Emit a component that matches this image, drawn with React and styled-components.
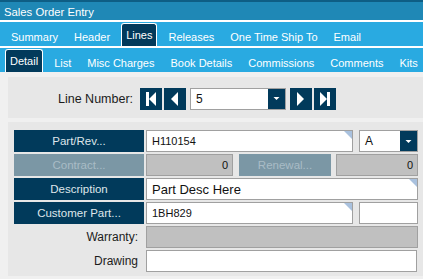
import React from "react";
import styled, { createGlobalStyle } from "styled-components";

const GlobalStyle = createGlobalStyle`
  body {
    margin: 0;
    background: #f0f0f0;
    font-family: "Liberation Sans", Arial, sans-serif;
    overflow: hidden;
  }
`;

const mainTabs = ["Summary", "Header", "Lines", "Releases", "One Time Ship To", "Email"];
const subTabs = ["Detail", "List", "Misc Charges", "Book Details", "Commissions", "Comments", "Kits"];

function NavIcon({ kind }) {
  // simple first / prev / next / last glyphs
  return (
    <svg width="22" height="22" viewBox="0 0 22 22">
      {kind === "first" && (
        <>
          <rect x="6" y="4" width="3" height="14" fill="#fff" />
          <polygon points="9,11 16,4 16,18" fill="#fff" />
        </>
      )}
      {kind === "prev" && <polygon points="7,11 14,4 14,18" fill="#fff" />}
      {kind === "next" && <polygon points="7,4 7,18 14,11" fill="#fff" />}
      {kind === "last" && (
        <>
          <polygon points="6,4 6,18 13,11" fill="#fff" />
          <rect x="13" y="4" width="3" height="14" fill="#fff" />
        </>
      )}
    </svg>
  );
}

function DropArrow() {
  return (
    <svg width="7" height="5" viewBox="0 0 7 5">
      <polygon points="0.5,1 6.5,1 3.5,4" fill="#fff" />
    </svg>
  );
}

export default function App() {
  return (
    <Window>
      <GlobalStyle />
      <Header>
        <TitleBar>Sales Order Entry</TitleBar>
        <TabRow $first>
          {mainTabs.map((t) => (
            <Tab key={t} $active={t === "Lines"}>
              {t}
            </Tab>
          ))}
        </TabRow>
        <TabRow>
          {subTabs.map((t) => (
            <Tab key={t} $active={t === "Detail"}>
              {t}
            </Tab>
          ))}
        </TabRow>
      </Header>

      <Content>
        <NavPanel>
          <NavLabel>Line Number:</NavLabel>
          <NavButton>
            <NavIcon kind="first" />
          </NavButton>
          <NavButton>
            <NavIcon kind="prev" />
          </NavButton>
          <Select $width={96}>
            <SelectText>5</SelectText>
            <SelectArrow>
              <DropArrow />
            </SelectArrow>
          </Select>
          <NavButton>
            <NavIcon kind="next" />
          </NavButton>
          <NavButton>
            <NavIcon kind="last" />
          </NavButton>
        </NavPanel>

        <FormPanel>
          <Row>
            <LabelButton>Part/Rev...</LabelButton>
            <Field $corner>H110154</Field>
            <Select $width={59} $gap>
              <SelectText>A</SelectText>
              <SelectArrow>
                <DropArrow />
              </SelectArrow>
            </Select>
          </Row>
          <Row>
            <LabelButton $disabled>Contract...</LabelButton>
            <Field $disabled $right $width={87}>
              0
            </Field>
            <LabelButton $disabled $width={92} $gapLeft={6}>
              Renewal...
            </LabelButton>
            <Field $disabled $right $gapLeft={3}>
              0
            </Field>
          </Row>
          <Row>
            <LabelButton>Description</LabelButton>
            <Field $corner $big>
              Part Desc Here
            </Field>
          </Row>
          <Row>
            <LabelButton>Customer Part...</LabelButton>
            <Field $corner>1BH829</Field>
            <Field $width={59} $gapLeft={6} />
          </Row>
          <Row>
            <PlainLabel>Warranty:</PlainLabel>
            <Field $disabled />
          </Row>
          <Row>
            <PlainLabel>Drawing</PlainLabel>
            <Field $trim />
          </Row>
        </FormPanel>
      </Content>
    </Window>
  );
}

const Window = styled.div`
  width: 423px;
  height: 279px;
  overflow: hidden;
`;

const Header = styled.div`
  display: flex;
  flex-direction: column;
  gap: 2px;
  background: #fff;
`;

const TitleBar = styled.div`
  box-sizing: border-box;
  height: 20px;
  border-top: 2px solid #0e5e85;
  background: #1f88b6;
  color: #fff;
  font-size: 11.3px;
  padding: 1px 0 0 4px;
  display: flex;
  align-items: center;
`;

const TabRow = styled.div`
  height: 24px;
  background: #29aae1;
  display: flex;
  align-items: flex-end;
  padding-left: ${(p) => (p.$first ? "3px" : "2px")};
  white-space: nowrap;
`;

const Tab = styled.div`
  box-sizing: border-box;
  height: ${(p) => (p.$active ? "23px" : "20px")};
  padding: 0 4px;
  margin: 0 3px;
  border: 1px solid ${(p) => (p.$active ? "#fff" : "transparent")};
  border-bottom: none;
  border-radius: 3px 3px 0 0;
  background: ${(p) => (p.$active ? "#023a5b" : "transparent")};
  color: #fff;
  font-size: 11px;
  display: flex;
  align-items: center;
`;

const Content = styled.div`
  padding: 5px 0 0 8px;
  display: flex;
  flex-direction: column;
  gap: 4px;
`;

const NavPanel = styled.div`
  height: 41px;
  background: #e7e7e7;
  display: flex;
  align-items: center;
  padding: 2px 0 0 50px;
  box-sizing: border-box;
  gap: 2px;
`;

const NavLabel = styled.div`
  font-size: 12.5px;
  color: #1b1b1b;
  margin-right: 5px;
`;

const NavButton = styled.div`
  width: 22px;
  height: 22px;
  background: #013a5b;
  display: flex;
`;

const Select = styled.div`
  box-sizing: border-box;
  width: ${(p) => p.$width}px;
  height: 22px;
  margin: ${(p) => (p.$gap ? "0 0 0 6px" : "0 2px 0 2px")};
  border: 1px solid #a0a0a0;
  background: #fff;
  display: flex;
`;

const SelectText = styled.div`
  flex: 1;
  padding-left: 5px;
  font-size: 12px;
  color: #111;
  display: flex;
  align-items: center;
`;

const SelectArrow = styled.div`
  width: 17px;
  background: #013a5b;
  display: flex;
  align-items: center;
  justify-content: center;
`;

const FormPanel = styled.div`
  background: #e7e7e7;
  padding: 8px 5px 4px 6px;
  display: flex;
  flex-direction: column;
  gap: 2px;
`;

const Row = styled.div`
  height: 22px;
  display: flex;
`;

const LabelButton = styled.div`
  box-sizing: border-box;
  width: ${(p) => p.$width || 130}px;
  margin-left: ${(p) => p.$gapLeft || 0}px;
  margin-right: 2px;
  background: ${(p) => (p.$disabled ? "#7b97a5" : "#013a5b")};
  color: ${(p) => (p.$disabled ? "#a9bcc6" : "#dfe6ea")};
  font-size: 11.5px;
  display: flex;
  align-items: center;
  justify-content: center;
`;

const PlainLabel = styled.div`
  box-sizing: border-box;
  width: 130px;
  margin-right: 2px;
  padding-right: 6px;
  font-size: 12px;
  color: #1b1b1b;
  display: flex;
  align-items: center;
  justify-content: flex-end;
`;

const Field = styled.div`
  position: relative;
  box-sizing: border-box;
  ${(p) => (p.$width ? `width: ${p.$width}px;` : "flex: 1;")}
  margin-left: ${(p) => p.$gapLeft || 0}px;
  margin-right: ${(p) => (p.$trim ? "1px" : "0")};
  border: 1px solid #a0a0a0;
  background: ${(p) => (p.$disabled ? "#c0c0c0" : "#fff")};
  color: #111;
  font-size: ${(p) => (p.$big ? "13px" : "11px")};
  padding: 0 4px 0 5px;
  display: flex;
  align-items: center;
  justify-content: ${(p) => (p.$right ? "flex-end" : "flex-start")};

  &::after {
    content: "";
    display: ${(p) => (p.$corner ? "block" : "none")};
    position: absolute;
    top: 0;
    right: 0;
    width: 0;
    height: 0;
    border-top: 8px solid #a9c1de;
    border-left: 8px solid transparent;
  }
`;
